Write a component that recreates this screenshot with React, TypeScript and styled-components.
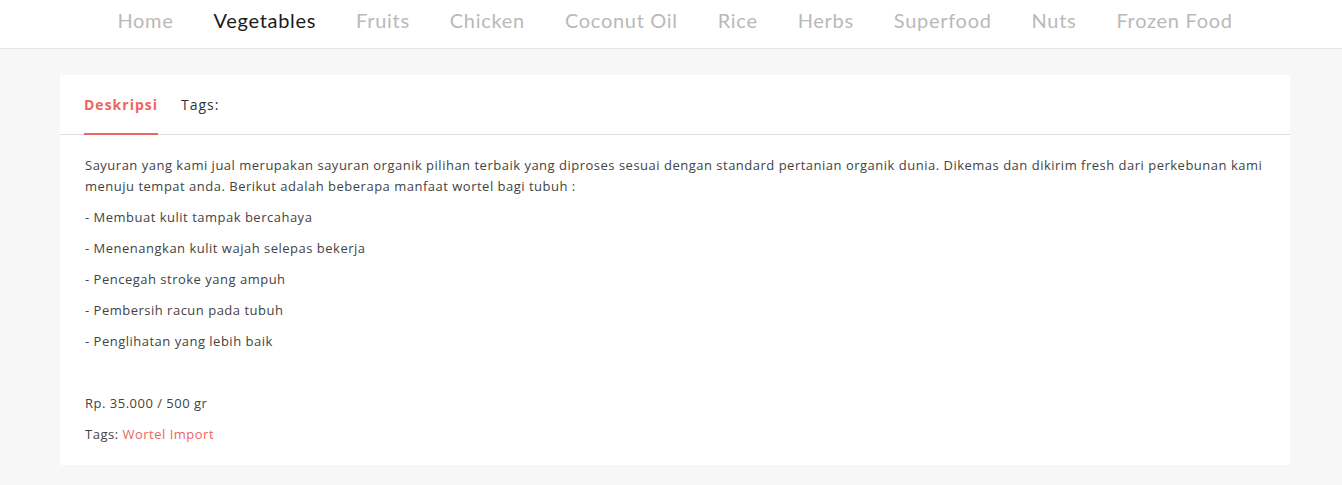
import React from 'react'
import styled, { createGlobalStyle } from 'styled-components'

const GlobalStyle = createGlobalStyle`
  html, body {
    margin: 0;
    padding: 0;
    background: #f7f7f7;
  }
  * {
    box-sizing: border-box;
  }
`

const NavBar = styled.nav`
  height: 49px;
  background: #fff;
  border-bottom: 1px solid #e6e6e6;
  display: flex;
  justify-content: center;
  align-items: center;
  gap: 40px;
  padding-bottom: 9px;
  padding-left: 8px;
`

const NavLink = styled.a<{ $active?: boolean }>`
  font-family: Lato, 'Open Sans', sans-serif;
  font-size: 20px;
  letter-spacing: 0.7px;
  color: ${({ $active }) => ($active ? '#1a1a1a' : '#b9b9b9')};
  text-decoration: none;
  cursor: pointer;
`

const Page = styled.main`
  background: #f7f7f7;
  padding: 26px 52px 20px 60px;
  min-height: 436px;
`

const Card = styled.section`
  background: #fff;
  width: 1230px;
`

const TabBar = styled.div`
  display: flex;
  align-items: stretch;
  gap: 23px;
  height: 60px;
  padding: 0 24px;
  border-bottom: 1px solid #dedede;
`

const Tab = styled.button<{ $active?: boolean }>`
  font-family: 'Open Sans', sans-serif;
  font-size: 14px;
  font-weight: ${({ $active }) => ($active ? 700 : 400)};
  letter-spacing: 1px;
  color: ${({ $active }) => ($active ? '#ee6461' : '#333')};
  background: transparent;
  border: none;
  border-bottom: 2px solid ${({ $active }) => ($active ? '#ee6461' : 'transparent')};
  margin-bottom: -1px;
  padding: 0;
  padding-top: 1px;
  cursor: pointer;
`

const TabBody = styled.div`
  padding: 20px 25px 10px;
  font-family: 'Open Sans', sans-serif;
  font-size: 13px;
  line-height: 21px;
  letter-spacing: 0.5px;
  color: #434343;
`

const Para = styled.p`
  margin: 0 0 10px;
  min-height: 21px;
`

const TagLink = styled.a`
  color: #ee6461;
  text-decoration: none;
`

const navItems = [
  'Home',
  'Vegetables',
  'Fruits',
  'Chicken',
  'Coconut Oil',
  'Rice',
  'Herbs',
  'Superfood',
  'Nuts',
  'Frozen Food',
]

const benefits = [
  'Membuat kulit tampak bercahaya',
  'Menenangkan kulit wajah selepas bekerja',
  'Pencegah stroke yang ampuh',
  'Pembersih racun pada tubuh',
  'Penglihatan yang lebih baik',
]

export default function App() {
  return (
    <>
      <GlobalStyle />
      <NavBar>
        {navItems.map((item) => (
          <NavLink key={item} $active={item === 'Vegetables'}>
            {item}
          </NavLink>
        ))}
      </NavBar>
      <Page>
        <Card>
          <TabBar>
            <Tab $active>Deskripsi</Tab>
            <Tab>Tags:</Tab>
          </TabBar>
          <TabBody>
            <Para>
              Sayuran yang kami jual merupakan sayuran organik pilihan terbaik yang diproses sesuai dengan
              standard pertanian organik dunia. Dikemas dan dikirim fresh dari perkebunan kami menuju tempat
              anda. Berikut adalah beberapa manfaat wortel bagi tubuh :
            </Para>
            {benefits.map((b) => (
              <Para key={b}>- {b}</Para>
            ))}
            <Para />
            <Para>Rp. 35.000 / 500 gr</Para>
            <Para>
              Tags: <TagLink>Wortel Import</TagLink>
            </Para>
          </TabBody>
        </Card>
      </Page>
    </>
  )
}
